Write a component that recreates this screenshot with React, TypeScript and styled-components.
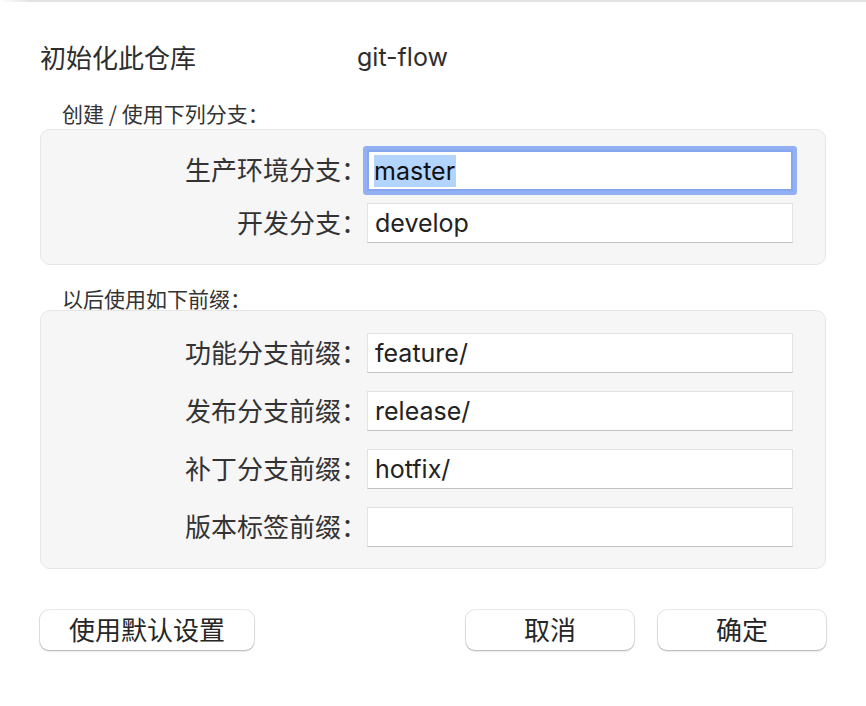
import React from "react";
import styled, { createGlobalStyle } from "styled-components";

const GlobalStyle = createGlobalStyle`
  html, body {
    margin: 0;
    padding: 0;
    background: #ffffff;
  }
  body {
    font-family: "Inter", "Noto Sans CJK SC", sans-serif;
    -webkit-font-smoothing: antialiased;
  }
`;

const Page = styled.div`
  width: 866px;
  height: 706px;
  background: #ffffff;
  overflow: hidden;
`;

const TopEdge = styled.div`
  height: 2px;
  background: linear-gradient(to right, #ffffff 0px, #e2e2e2 30px, #e2e2e2 100%);
`;

const Dialog = styled.div`
  padding: 0 40px;
  display: flex;
  flex-direction: column;
`;

const Header = styled.div`
  margin-top: 37px;
  display: flex;
  align-items: center;
  height: 36px;
`;

const Title = styled.div`
  width: 317px;
  font-family: "Noto Sans CJK SC", sans-serif;
  font-size: 26px;
  line-height: 36px;
  color: #2e2e2e;
`;

const Repo = styled.div`
  font-family: "Inter", sans-serif;
  font-size: 25px;
  line-height: 36px;
  color: #2e2e2e;
`;

const SectionLabel = styled.div<{ $mt: number }>`
  margin-top: ${(p) => p.$mt}px;
  margin-left: 22px;
  font-family: "Noto Sans CJK SC", sans-serif;
  font-size: 21px;
  line-height: 24px;
  color: #333333;
`;

const Panel = styled.div<{ $mt: number; $pt: number; $pb: number; $gap: number }>`
  margin-top: ${(p) => p.$mt}px;
  box-sizing: border-box;
  background: #f6f6f6;
  border: 1px solid #e6e6e6;
  border-radius: 10px;
  padding: ${(p) => p.$pt}px 32px ${(p) => p.$pb}px 0;
  display: flex;
  flex-direction: column;
  gap: ${(p) => p.$gap}px;
`;

const FieldRow = styled.div`
  display: grid;
  grid-template-columns: 1fr 426px;
  align-items: center;
`;

const FieldLabel = styled.div`
  text-align: right;
  font-family: "Noto Sans CJK SC", sans-serif;
  font-size: 26px;
  line-height: 36px;
  padding-bottom: 3px;
  color: #333333;
  white-space: nowrap;
`;

const TextField = styled.div<{ $focused?: boolean }>`
  box-sizing: border-box;
  height: 40px;
  background: #ffffff;
  border: 1px solid #e2e2e2;
  border-bottom-color: #c2c2c2;
  padding: 0 0 0 7px;
  display: flex;
  align-items: center;
  font-family: "Inter", sans-serif;
  font-size: 25px;
  color: #222222;
  ${(p) =>
    p.$focused &&
    `
    height: 41px;
    border: 2px solid #86a6ef;
    border-radius: 1px;
    padding-left: 5px;
    box-shadow: 0 0 0 4px #92b0f3;
  `}
`;

const Selected = styled.span`
  display: inline-block;
  background: #b3d4fd;
  color: #111111;
  line-height: 32px;
  padding: 0 1px 0 0;
`;

const ButtonBar = styled.div`
  margin-top: 41px;
  display: flex;
  align-items: center;
  gap: 24px;
`;

const Spacer = styled.div`
  flex: 1;
`;

const Button = styled.div<{ $w: number }>`
  box-sizing: border-box;
  width: ${(p) => p.$w}px;
  height: 40px;
  padding-bottom: 4px;
  border-radius: 9px;
  background: #ffffff;
  box-shadow: 0 0 0 1px rgba(0, 0, 0, 0.07), 0 1px 2px rgba(0, 0, 0, 0.28);
  display: flex;
  align-items: center;
  justify-content: center;
  font-family: "Noto Sans CJK SC", sans-serif;
  font-size: 26px;
  color: #262626;
`;

export default function App() {
  return (
    <Page>
      <GlobalStyle />
      <TopEdge />
      <Dialog>
        <Header>
          <Title>初始化此仓库</Title>
          <Repo>git-flow</Repo>
        </Header>

        <SectionLabel $mt={26}>创建 / 使用下列分支：</SectionLabel>
        <Panel $mt={4} $pt={20} $pb={21} $gap={12}>
          <FieldRow>
            <FieldLabel>生产环境分支：</FieldLabel>
            <TextField $focused>
              <Selected>master</Selected>
            </TextField>
          </FieldRow>
          <FieldRow>
            <FieldLabel>开发分支：</FieldLabel>
            <TextField>develop</TextField>
          </FieldRow>
        </Panel>

        <SectionLabel $mt={21}>以后使用如下前缀：</SectionLabel>
        <Panel $mt={0} $pt={22} $pb={21} $gap={18}>
          <FieldRow>
            <FieldLabel>功能分支前缀：</FieldLabel>
            <TextField>feature/</TextField>
          </FieldRow>
          <FieldRow>
            <FieldLabel>发布分支前缀：</FieldLabel>
            <TextField>release/</TextField>
          </FieldRow>
          <FieldRow>
            <FieldLabel>补丁分支前缀：</FieldLabel>
            <TextField>hotfix/</TextField>
          </FieldRow>
          <FieldRow>
            <FieldLabel>版本标签前缀：</FieldLabel>
            <TextField />
          </FieldRow>
        </Panel>

        <ButtonBar>
          <Button $w={214}>使用默认设置</Button>
          <Spacer />
          <Button $w={168}>取消</Button>
          <Button $w={168}>确定</Button>
        </ButtonBar>
      </Dialog>
    </Page>
  );
}
